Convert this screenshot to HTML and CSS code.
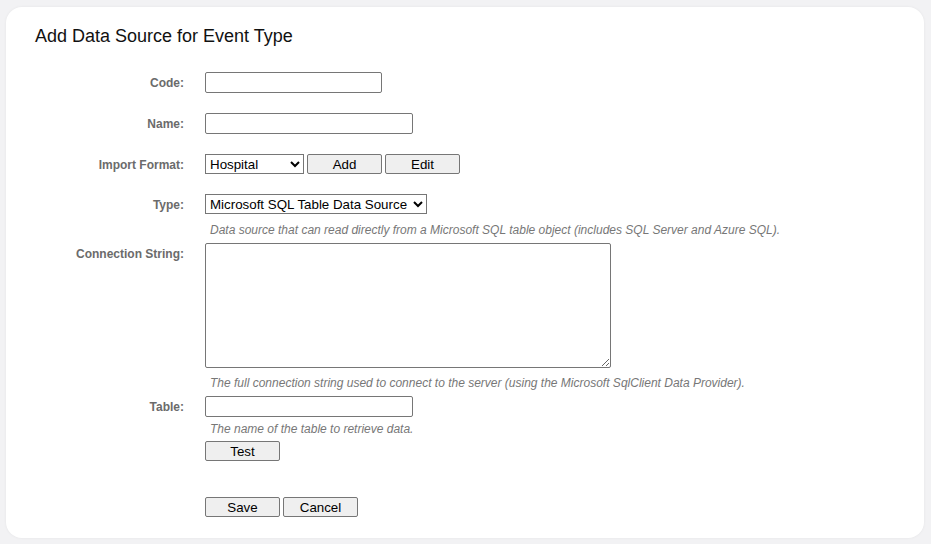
FILE: index.html
```html
<!DOCTYPE html>
<html lang="en">
<head>
<meta charset="utf-8">
<title>Add Data Source for Event Type</title>
<link rel="stylesheet" href="styles.css">
</head>
<body>
<div class="card">
  <h1 class="title">Add Data Source for Event Type</h1>
  <div class="form">
    <div class="row r-code">
      <label class="lbl" for="code">Code:</label>
      <div class="field"><input id="code" class="txt w-code" type="text"></div>
    </div>
    <div class="row r-gap">
      <label class="lbl" for="name">Name:</label>
      <div class="field"><input id="name" class="txt w-name" type="text"></div>
    </div>
    <div class="row r-gap">
      <label class="lbl lbl-sel" for="fmt">Import Format:</label>
      <div class="field">
        <select id="fmt" class="sel w-fmt"><option>Hospital</option></select>
        <button class="btn" type="button">Add</button>
        <button class="btn" type="button">Edit</button>
      </div>
    </div>
    <div class="row r-gap">
      <label class="lbl lbl-sel" for="type">Type:</label>
      <div class="field"><select id="type" class="sel w-type"><option>Microsoft SQL Table Data Source</option></select></div>
    </div>
    <div class="row r-desc1">
      <span></span>
      <div class="desc">Data source that can read directly from a Microsoft SQL table object (includes SQL Server and Azure SQL).</div>
    </div>
    <div class="row r-conn top">
      <label class="lbl lbl-top" for="conn">Connection String:</label>
      <div class="field"><textarea id="conn" class="area"></textarea></div>
    </div>
    <div class="row r-desc2">
      <span></span>
      <div class="desc">The full connection string used to connect to the server (using the Microsoft SqlClient Data Provider).</div>
    </div>
    <div class="row r-table">
      <label class="lbl" for="tbl">Table:</label>
      <div class="field"><input id="tbl" class="txt w-name" type="text"></div>
    </div>
    <div class="row r-desc3">
      <span></span>
      <div class="desc">The name of the table to retrieve data.</div>
    </div>
    <div class="row r-test">
      <span></span>
      <div class="field"><button class="btn" type="button">Test</button></div>
    </div>
    <div class="row r-save">
      <span></span>
      <div class="field">
        <button class="btn" type="button">Save</button>
        <button class="btn" type="button">Cancel</button>
      </div>
    </div>
  </div>
</div>
</body>
</html>
```
FILE: styles.css
```css
html, body {
  margin: 0;
  padding: 0;
}
body {
  background: #f2f2f4;
  font-family: "Liberation Sans", Arial, sans-serif;
  padding: 7px 7px 6px 6px;
  box-sizing: border-box;
  height: 544px;
}
.card {
  background: #ffffff;
  border-radius: 16px;
  box-shadow: 0 0 3px rgba(0, 0, 0, 0.06);
  width: 918px;
  height: 531px;
  box-sizing: border-box;
  padding: 19px 29px 0 29px;
}
.title {
  margin: 0;
  font-size: 18px;
  font-weight: normal;
  line-height: 21px;
  color: #111111;
}
.form {
  margin-top: 25px;
}
.row {
  display: grid;
  grid-template-columns: 149px 1fr;
  column-gap: 21px;
  align-items: center;
}
.row.top {
  align-items: start;
}
.r-gap { margin-top: 20px; }
.r-desc1 { margin-top: 9px; }
.r-conn { margin-top: 6px; }
.r-desc2 { margin-top: 8px; }
.r-table { margin-top: 6px; }
.r-desc3 { margin-top: 5px; }
.r-test { margin-top: 5px; }
.r-save { margin-top: 36px; }
.lbl {
  text-align: right;
  font-size: 12px;
  font-weight: bold;
  color: #6b6b6b;
  line-height: 14px;
}
.lbl-sel {
  padding-top: 2px;
}
.lbl-top {
  padding-top: 4px;
}
.field {
  display: flex;
  align-items: center;
  gap: 3px;
  line-height: 0;
}
.desc {
  font-size: 12px;
  font-style: italic;
  color: #777777;
  line-height: 14px;
  padding-left: 5px;
}
.txt {
  font-family: "Liberation Sans", Arial, sans-serif;
  font-size: 13.333px;
  box-sizing: border-box;
  height: 21px;
  margin: 0;
  padding: 1px 2px;
  border: 1px solid #767676;
  border-radius: 2px;
  background: #ffffff;
}
.w-code { width: 177px; }
.w-name { width: 208px; }
.sel {
  font-family: "Liberation Sans", Arial, sans-serif;
  font-size: 13.333px;
  box-sizing: border-box;
  height: 20px;
  margin: 0;
  border: 1px solid #767676;
  border-radius: 0;
  background: #ffffff;
  color: #000000;
}
.w-fmt { width: 99px; }
.w-type { width: 222px; }
.btn {
  font-family: "Liberation Sans", Arial, sans-serif;
  font-size: 13.333px;
  box-sizing: border-box;
  width: 75px;
  height: 20px;
  margin: 0;
  padding: 0 6px;
  border: 1px solid #767676;
  border-radius: 2px;
  background: #efefef;
  color: #000000;
}
.area {
  font-family: "Liberation Mono", monospace;
  font-size: 13.333px;
  box-sizing: border-box;
  width: 406px;
  height: 125px;
  margin: 0;
  border: 1px solid #767676;
  border-radius: 2px;
  background: #ffffff;
}
```
